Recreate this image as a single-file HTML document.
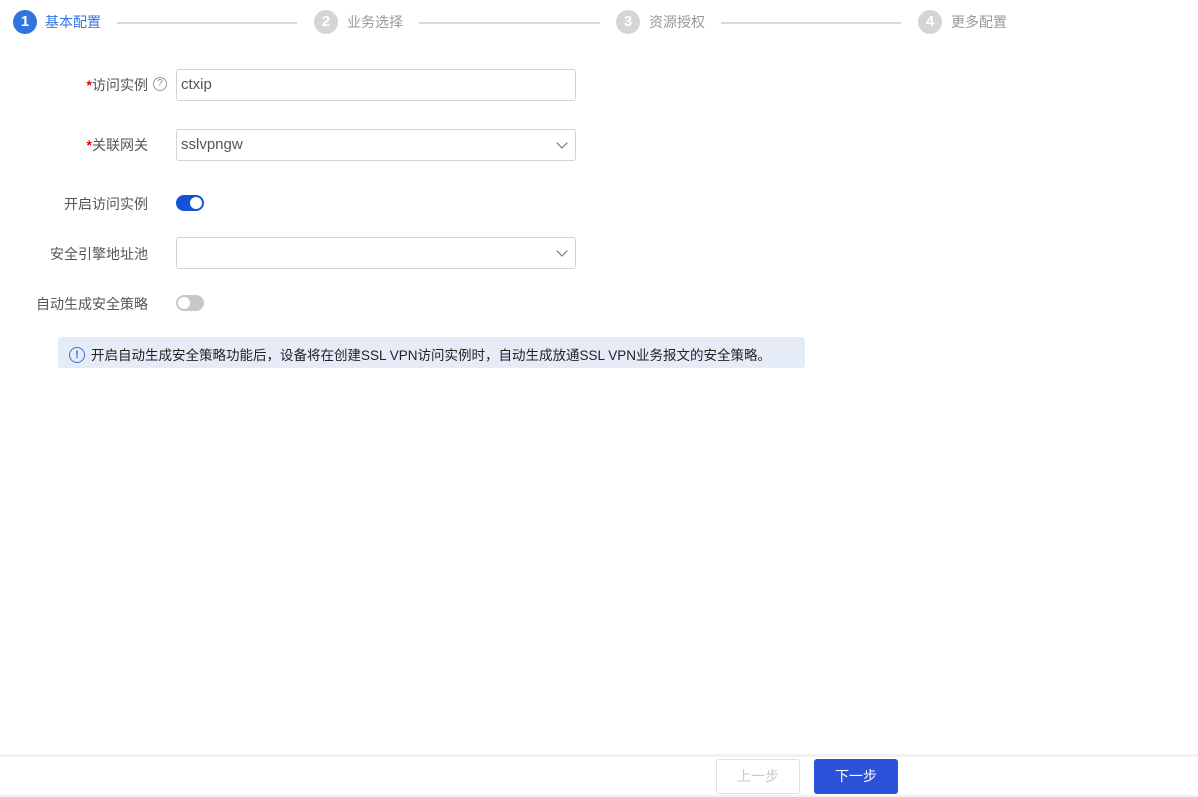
<!DOCTYPE html><html><head><meta charset="utf-8"><style>
body{margin:0;width:1198px;height:797px;background:#fff;font-family:"Liberation Sans","Noto Sans CJK SC",sans-serif;font-size:14px;color:#333;position:relative;overflow:hidden}
.a{position:absolute}
.c{width:24px;height:24px;border-radius:50%;color:#fff;font-weight:bold;font-size:15px;text-align:center;line-height:24px;background:#d5d5d5}
.st{font-size:14px;color:#999;line-height:24px}
.ln{height:2px;background:#d9d9d9}
.lb{right:1050px;text-align:right;color:#555;font-size:14px}
.in{left:176px;width:394px;height:30px;border:1px solid #d4d4d4;border-radius:3px;line-height:30px;padding-left:4px;box-sizing:content-box;font-size:15px;color:#555}
.ch{position:absolute;right:9px;top:9px;width:7px;height:7px;border-right:1.5px solid #666;border-bottom:1.5px solid #666;transform:rotate(45deg)}
.tg{left:176px;width:28px;height:16px;border-radius:8px}
.tg i{position:absolute;top:2px;width:12px;height:12px;border-radius:50%;background:#fff}
</style></head><body>
<div class="a c" style="left:13px;top:10px;background:#3275e0">1</div>
<div class="a st" style="left:45px;top:10px;color:#3275e0">基本配置</div>
<div class="a ln" style="left:117px;top:22px;width:180px"></div>
<div class="a c" style="left:314px;top:10px">2</div>
<div class="a st" style="left:347px;top:10px">业务选择</div>
<div class="a ln" style="left:419px;top:22px;width:181px"></div>
<div class="a c" style="left:616px;top:10px">3</div>
<div class="a st" style="left:649px;top:10px">资源授权</div>
<div class="a ln" style="left:721px;top:22px;width:180px"></div>
<div class="a c" style="left:918px;top:10px">4</div>
<div class="a st" style="left:951px;top:10px">更多配置</div>

<div class="a lb" style="top:75px"><span style="color:#e00;font-weight:bold">*</span>访问实例</div>
<div class="a" style="left:153px;top:77px;width:12px;height:12px;border:1px solid #999;border-radius:50%;font-size:10px;line-height:12px;text-align:center;color:#888">?</div>
<div class="a in" style="top:69px">ctxip</div>
<div class="a lb" style="top:135px"><span style="color:#e00;font-weight:bold">*</span>关联网关</div>
<div class="a in" style="top:129px">sslvpngw<span class="ch"></span></div>
<div class="a lb" style="top:194px">开启访问实例</div>
<div class="a tg" style="top:195px;background:#1652d8"><i style="left:14px"></i></div>
<div class="a lb" style="top:244px">安全引擎地址池</div>
<div class="a in" style="top:237px"><span class="ch"></span></div>
<div class="a lb" style="top:294px">自动生成安全策略</div>
<div class="a tg" style="top:295px;background:#c8c8c8"><i style="left:2px"></i></div>
<div class="a" style="left:58px;top:337px;width:747px;height:31px;background:#e6ebf8;border-radius:3px"></div>
<div class="a" style="left:69px;top:347px;width:14px;height:14px;border:1.5px solid #2f6ee0;border-radius:50%;color:#2f6ee0;font-size:11px;font-weight:bold;text-align:center;line-height:14px">!</div>
<div class="a" style="left:91px;top:344px;font-size:13.5px;color:#222">开启自动生成安全策略功能后，设备将在创建SSL VPN访问实例时，自动生成放通SSL VPN业务报文的安全策略。</div>

<div class="a" style="left:0;top:754px;width:1198px;height:3px;background:#f2f2f2"></div>
<div class="a" style="left:0;top:795px;width:1198px;height:2px;background:#f2f2f2"></div>
<div class="a" style="left:716px;top:759px;width:82px;height:33px;border:1px solid #e0e0e0;border-radius:3px;color:#c8c8c8;text-align:center;line-height:33px;font-size:14px">上一步</div>
<div class="a" style="left:814px;top:759px;width:84px;height:35px;background:#2b52d8;border-radius:3px;color:#fff;text-align:center;line-height:35px;font-size:14px">下一步</div>
</body></html>
